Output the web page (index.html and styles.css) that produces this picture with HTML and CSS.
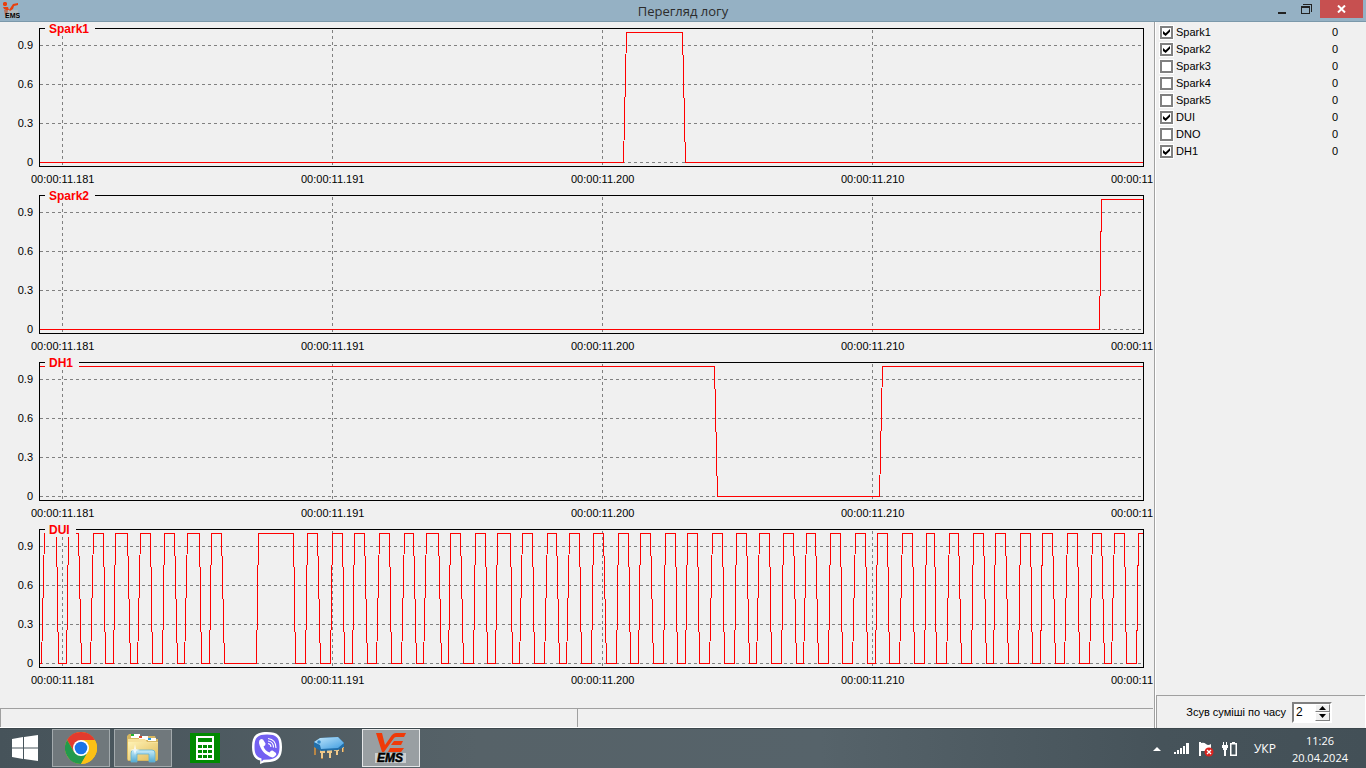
FILE: index.html
```html
<!DOCTYPE html>
<html lang="uk">
<head>
<meta charset="utf-8">
<title>Перегляд логу</title>
<link rel="stylesheet" href="styles.css">
</head>
<body>
<svg class="defs" aria-hidden="true">
  <defs>
    <g id="grid">
      <path class="grid-line" d="M0 17H1103M0 56H1103M0 95H1103M0 134H1103"/>
      <path class="grid-line" d="M23 1V136M293 1V136M563 1V136M833 1V136"/>
    </g>
    <rect id="frame" class="frame" x="0" y="0" width="1104" height="138"/>
  </defs>
</svg>

<header class="titlebar">
  <svg class="app-icon" width="18" height="17" viewBox="0 0 18 17" aria-hidden="true">
    <rect x="3" y="8" width="13" height="8" fill="#b9bcbc" opacity=".7"/>
    <path d="M2 0h2l1 1v2L4 4H2L1 3V1zM1 5h5l1 3H4L2 7zM7 8l4-6 5-1v2l-4 1-1 3-3 2z" fill="#e8400f"/>
    <path d="M2 8h4l-1 5H3z" fill="#b5715a"/>
    <text class="app-icon-text" x="3" y="16">EMS</text>
  </svg>
  <h1 class="title">Перегляд логу</h1>
  <div class="window-buttons">
    <button class="win-btn" aria-label="Згорнути"><svg width="10" height="12" viewBox="0 0 10 12"><path d="M1 9h8v2H1z" fill="#222"/></svg></button>
    <button class="win-btn" aria-label="Відновити"><svg width="11" height="11" viewBox="0 0 11 11" shape-rendering="crispEdges"><path d="M2 0h9v8h-1V1H2zM0 2h9v8H0zM1 4v5h7V4z" fill="#222" fill-rule="evenodd"/></svg></button>
    <button class="win-btn win-close" aria-label="Закрити"><svg width="9" height="8" viewBox="0 0 9 8"><path d="M1 .5l7 7M8 .5l-7 7" stroke="#fff" stroke-width="2"/></svg></button>
  </div>
</header>

<div class="workspace">
  <main class="viewer">
    <section class="charts">
      <article class="chart">
        <div class="y-axis"><span>0.9</span><span>0.6</span><span>0.3</span><span>0</span></div>
        <div class="plot">
          <h2 class="chart-name">Spark1</h2>
          <svg class="plot-svg" viewBox="0 0 1105 139" preserveAspectRatio="none" aria-hidden="true"><g transform="translate(.5 .5)">
            <use href="#grid"/>
            <path class="trace" d="M0 134H584L587 4H643L646 134H1103"/>
            <use href="#frame"/>
          </g></svg>
        </div>
        <div class="x-axis"><span>00:00:11.181</span><span>00:00:11.191</span><span>00:00:11.200</span><span>00:00:11.210</span><span>00:00:11</span></div>
      </article>
      <article class="chart">
        <div class="y-axis"><span>0.9</span><span>0.6</span><span>0.3</span><span>0</span></div>
        <div class="plot">
          <h2 class="chart-name">Spark2</h2>
          <svg class="plot-svg" viewBox="0 0 1105 139" preserveAspectRatio="none" aria-hidden="true"><g transform="translate(.5 .5)">
            <use href="#grid"/>
            <path class="trace" d="M0 134H1060L1062 4H1103"/>
            <use href="#frame"/>
          </g></svg>
        </div>
        <div class="x-axis"><span>00:00:11.181</span><span>00:00:11.191</span><span>00:00:11.200</span><span>00:00:11.210</span><span>00:00:11</span></div>
      </article>
      <article class="chart">
        <div class="y-axis"><span>0.9</span><span>0.6</span><span>0.3</span><span>0</span></div>
        <div class="plot">
          <h2 class="chart-name">DH1</h2>
          <svg class="plot-svg" viewBox="0 0 1105 139" preserveAspectRatio="none" aria-hidden="true"><g transform="translate(.5 .5)">
            <use href="#grid"/>
            <path class="trace" d="M0 4H675L678 134H840L843 4H1103"/>
            <use href="#frame"/>
          </g></svg>
        </div>
        <div class="x-axis"><span>00:00:11.181</span><span>00:00:11.191</span><span>00:00:11.200</span><span>00:00:11.210</span><span>00:00:11</span></div>
      </article>
      <article class="chart">
        <div class="y-axis"><span>0.9</span><span>0.6</span><span>0.3</span><span>0</span></div>
        <div class="plot">
          <h2 class="chart-name">DUI</h2>
          <svg class="plot-svg" viewBox="0 0 1105 139" preserveAspectRatio="none" aria-hidden="true"><g transform="translate(.5 .5)">
            <use href="#grid"/>
            <path class="trace" transform="translate(-39 0)" d="M39 134H41L44 4H56L58 134H66L68 4H78L81 134H90L93 4H103L105 134H113L115 4H127L130 134H137L140 4H150L152 134H162L164 4H174L177 134H184L187 4H199L201 134H209L211 4H221L224 134H256L258 4H293L295 134H305L307 4H317L320 134H330L332 4H342L344 134H352L354 4H364L367 134H376L379 4H389L391 134H401L404 4H413L416 134H423L426 4H438L441 134H448L450 4H460L463 134H473L475 4H485L487 134H495L497 4H510L512 134H519L522 4H532L534 134H544L547 4H556L559 134H566L569 4H579L581 134H591L593 4H603L606 134H616L618 4H628L630 134H638L640 4H650L653 134H663L665 4H675L677 134H685L687 4H697L699 134H709L712 4H722L724 134H734L736 4H746L749 134H756L759 4H769L771 134H781L783 4H793L796 134H803L806 4H815L818 134H828L830 4H840L842 134H852L855 4H865L867 134H875L877 4H887L889 134H899L902 4H912L914 134H924L926 4H934L936 134H946L949 4H958L961 134H971L973 4H983L986 134H993L995 4H1005L1008 134H1018L1020 4H1030L1032 134H1040L1042 4H1052L1055 134H1064L1067 4H1077L1079 134H1089L1092 4H1101L1104 134H1111L1114 4H1124L1126 134H1136L1138 4H1142"/>
            <use href="#frame"/>
          </g></svg>
        </div>
        <div class="x-axis"><span>00:00:11.181</span><span>00:00:11.191</span><span>00:00:11.200</span><span>00:00:11.210</span><span>00:00:11</span></div>
      </article>
    </section>
    <footer class="statusbar"><div class="status-cell"></div><div class="status-cell"></div></footer>
  </main>

  <aside class="sidebar">
    <ul class="channels">
      <li><label><input type="checkbox" checked>Spark1</label><output>0</output></li>
      <li><label><input type="checkbox" checked>Spark2</label><output>0</output></li>
      <li><label><input type="checkbox">Spark3</label><output>0</output></li>
      <li><label><input type="checkbox">Spark4</label><output>0</output></li>
      <li><label><input type="checkbox">Spark5</label><output>0</output></li>
      <li><label><input type="checkbox" checked>DUI</label><output>0</output></li>
      <li><label><input type="checkbox">DNO</label><output>0</output></li>
      <li><label><input type="checkbox" checked>DH1</label><output>0</output></li>
    </ul>
    <div class="shift-panel">
      <label for="shift">Зсув суміші по часу</label>
      <div class="spin">
        <input id="shift" type="text" inputmode="numeric" value="2">
        <div class="spin-buttons">
          <button aria-label="Більше"><svg width="7" height="4" viewBox="0 0 7 4"><path d="M0 4L3.500 0 7 4z"/></svg></button>
          <button aria-label="Менше"><svg width="7" height="4" viewBox="0 0 7 4"><path d="M0 0L3.500 4 7 0z"/></svg></button>
        </div>
      </div>
    </div>
  </aside>
</div>

<nav class="taskbar">
  <button class="start" aria-label="Пуск"><svg width="26" height="26" viewBox="0 0 26 26"><path d="M0 4l11-2v10.500H0zM12 2l14-2v12.500H12zM0 13.500h11V24L0 22zM12 13.500h14V26l-14-2z" fill="#fff"/></svg></button>
  <div class="apps">
    <button class="app is-open" aria-label="Chrome">
      <svg width="32" height="32" viewBox="0 0 32 32">
        <circle cx="16" cy="16" r="16" fill="#fbc116"/>
        <path d="M2.140 8A16 16 0 0 1 29.860 8H16l-6.900 12z" fill="#e33b2e"/>
        <path d="M2.140 8A16 16 0 0 0 16 32l6.930-12L16 24l-6.930-4z" fill="#229a4c"/>
        <path d="M16 8h13.860A16 16 0 0 1 16 32l6.930-12z" fill="#fbc116"/>
        <circle cx="16" cy="16" r="8" fill="#fff"/><circle cx="16" cy="16" r="6.300" fill="#1a73e8"/>
      </svg>
    </button>
    <button class="app is-open" aria-label="Провідник">
      <svg width="34" height="32" viewBox="0 0 34 32">
        <defs>
          <linearGradient id="folder" x1="0" y1="0" x2="1" y2="1"><stop offset="0" stop-color="#fff3b5"/><stop offset="1" stop-color="#dfb958"/></linearGradient>
          <linearGradient id="stand" x1="0" y1="0" x2="0" y2="1"><stop offset="0" stop-color="#c9edfa"/><stop offset="1" stop-color="#51a9d3"/></linearGradient>
        </defs>
        <path d="M1 4l2-2h10l1 2h15l1 3h2v20l-1 2H2l-1-2z" fill="#d6b660"/>
        <path d="M5 2h9v4H5z" fill="#fff"/><path d="M5 2h3v2H5z" fill="#22b42d"/>
        <path d="M13 4h9v4h-9z" fill="#fff"/><path d="M13 4h3v2h-3z" fill="#d7472a"/>
        <path d="M2 7h17l2 3h11v3H2z" fill="#f7e19a"/><path d="M22 6h8v3h-8z" fill="#fff"/><path d="M22 6h3v2h-3z" fill="#2699e0"/>
        <path d="M2 10h17l2 1h11v16l-1 1H2z" fill="url(#folder)"/>
        <path d="M5 21q0-3 3-3h18q3 0 3 3v9h-6v-8H11v8H5z" fill="url(#stand)" stroke="#62b1d2" stroke-width=".8"/>
        <path d="M9 12l1 5 4 1-4 1-1 4-1-4-4-1 4-1z" fill="#fff" opacity=".8"/>
      </svg>
    </button>
    <button class="app" aria-label="Калькулятор">
      <svg width="30" height="30" viewBox="0 0 30 30" shape-rendering="crispEdges"><path d="M0 0h30v30H0z" fill="#008a00"/><path d="M6 3h18v24H6z" fill="#fff"/><path d="M8 5h14v4H8zM8 12h4v3H8zM13 12h4v3h-4zM18 12h4v3h-4zM8 17h4v3H8zM13 17h4v3h-4zM18 17h4v3h-4zM8 22h4v3H8zM13 22h4v3h-4zM18 22h4v3h-4z" fill="#008a00"/></svg>
    </button>
    <button class="app" aria-label="Viber">
      <svg width="32" height="32" viewBox="0 0 32 32">
        <path d="M16 0c11 0 15 4 15 15 0 10-4 14-12 15l-6 .5-4 1.500.3-3.500C3 27 1 22 1 15 1 4 5 0 16 0z" fill="#fff"/>
        <path d="M16 2.500c9.500 0 12.500 3 12.500 12.500 0 8.500-3 11.500-10 12.500l-6 .2L10.500 29.500v-3C5 25 3.500 21 3.500 15 3.500 5.500 6.500 2.500 16 2.500z" fill="#7360f2"/>
        <path d="M10 7l2 .5 2.500 4-.3 1.700-1.700 1.300c1 3 3 5 6 6l1.500-1.700 1.500-.2 3.500 2.500.3 1.600-2.300 2.400-1.700.3C14 23 9.500 18 8 11l.3-2.500z" fill="#fff"/>
        <path d="M17 11.500q3 .5 3 3.500M17 9q5.500.7 5.500 6.500M17 6.500q8 1 8 9.500" fill="none" stroke="#fff" stroke-width="1.100"/>
      </svg>
    </button>
    <button class="app" aria-label="Програматор">
      <svg width="32" height="24" viewBox="0 0 32 24">
        <defs><linearGradient id="chip" x1="0" y1="0" x2="1" y2="1"><stop offset="0" stop-color="#c5e9fc"/><stop offset="1" stop-color="#3d9be0"/></linearGradient></defs>
        <path d="M2 10v9M9 14v9M17 14v8M24 12v7M30 9v7" stroke="#b98746" stroke-width="2"/>
        <path d="M7 13h5v4h-2v5H8v-5H7zM14 13h5v4h-1v5h-2v-5h-2zM21 12h5v3h-1v4h-2v-4h-2zM28 9h3v3h-1v4h-1v-4h-1z" fill="#f2c988"/>
        <path d="M1 6l6-4 18-1 6 6v4l-6 3-17 1-7-4z" fill="#216ea9"/>
        <path d="M1 6l6-4 18-1 6 6-6 5-17 1-1-4z" fill="url(#chip)"/><circle cx="6" cy="6" r="1.800" fill="#2f86c7"/>
      </svg>
    </button>
    <button class="app is-active" aria-label="VEMS">
      <svg width="32" height="32" viewBox="0 0 32 32">
        <path d="M0 21h31v10H0z" fill="#ccd0d1"/>
        <path d="M1 1h6l3 12 7-10q2-2 4-2h10l-2 4h-8q-1 0-2 1L9 20H7z" fill="#f03a08"/>
        <path d="M19 9h9l-2 4H16zM15 16h14l-3 4H13z" fill="#f03a08"/>
        <text class="vems-text" x="2" y="30">EMS</text>
      </svg>
    </button>
  </div>
  <div class="tray">
    <svg width="8" height="5" viewBox="0 0 8 5"><path d="M0 5l4-4 4 4z" fill="#fff"/></svg>
    <svg width="16" height="12" viewBox="0 0 16 12" shape-rendering="crispEdges"><path d="M0 9h2v2H0zM3 7h2v4H3zM6 5h2v6H6zM9 3h2v8H9zM12 0h3v11h-3z" fill="#fff"/></svg>
    <svg width="16" height="16" viewBox="0 0 16 16"><path d="M1 1h2v14H1zM3 2q3-1 5 1t5 0v7H3z" fill="#fff"/><circle cx="11" cy="11" r="4.500" fill="#d9231f"/><path d="M9 9l4 4M13 9l-4 4" stroke="#fff" stroke-width="1.300"/></svg>
    <svg width="16" height="16" viewBox="0 0 16 16"><path d="M1 1h1v3h2V1h1v3h1v3H5v2H4v6H2V9H1V7H0V4h1zM10 1h3v1h2v13H8V2h2zM9.500 3.500v10h4v-10z" fill="#fff" fill-rule="evenodd"/></svg>
    <span class="lang">УКР</span>
    <time class="clock"><span>11:26</span><span>20.04.2024</span></time>
  </div>
</nav>
</body>
</html>
```

FILE: styles.css
```css
* { box-sizing: border-box; }

body {
  margin: 0;
  height: 100vh;
  display: flex;
  flex-direction: column;
  overflow: hidden;
  background: #f0f0f0;
  color: #000;
  font-family: "Liberation Sans", Arial, sans-serif;
  font-size: 11px;
}

button {
  margin: 0;
  padding: 0;
  border: 0;
  background: none;
  font: inherit;
}

svg { display: block; flex: none; }
.defs { position: absolute; width: 0; height: 0; }

/* Title bar */
.titlebar {
  flex: none;
  display: grid;
  grid-template-columns: 1fr auto 1fr;
  align-items: center;
  height: 22px;
  background: #95b1c4;
  border-bottom: 1px solid #7b98aa;
}
.app-icon { margin-left: 2px; }
.app-icon-text { font: bold 7px "Liberation Sans", Arial, sans-serif; }
.title {
  margin: 0;
  font: 13px/20px "Open Sans", "Noto Sans", sans-serif;
  color: #2c2c2c;
}
.window-buttons { display: flex; justify-self: end; align-self: start; padding-right: 3px; }
.win-btn { display: flex; justify-content: center; align-items: center; width: 24px; height: 18px; }
.win-close { width: 43px; margin-left: 2px; background: #c75050; }

/* Workspace */
.workspace { flex: 1; display: flex; min-height: 0; }
.viewer { flex: 1; display: flex; flex-direction: column; min-width: 0; }
.charts { flex: 1; padding-top: 6px; }
.chart {
  display: grid;
  grid-template-columns: 39px 1fr;
  grid-template-rows: 139px 28px;
  padding-right: 10px;
}
.y-axis {
  display: flex;
  flex-direction: column;
  padding: 11px 6px 0 0;
  text-align: right;
  line-height: 13px;
  gap: 26px;
}
.plot { position: relative; min-width: 0; }
.plot-svg { width: 100%; height: 139px; shape-rendering: crispEdges; }
.chart-name {
  position: absolute;
  left: 6px;
  top: -6px;
  margin: 0;
  padding: 0 6px 0 4px;
  background: #f0f0f0;
  color: #f00;
  font-size: 12px;
  line-height: 14px;
}
.grid-line { fill: none; stroke: #808080; stroke-dasharray: 3 3; }
.trace { fill: none; stroke: #f00; }
.frame { fill: none; stroke: #000; }
.x-axis {
  grid-column: 1 / -1;
  display: grid;
  grid-template-columns: repeat(4, 270fr) 42fr;
  margin: 6px -9px 0 31px;
  line-height: 13px;
  white-space: nowrap;
}
.x-axis span { min-width: 0; overflow: hidden; }

.statusbar { flex: none; display: flex; height: 20px; border-bottom: 1px solid #fff; padding-right: 1px; }
.status-cell { flex: 1; border: 1px solid #a0a0a0; border-width: 1px 0 0 1px; }

/* Sidebar */
.sidebar {
  flex: none;
  display: flex;
  flex-direction: column;
  justify-content: space-between;
  width: 212px;
  border-left: 1px solid #a0a0a0;
  box-shadow: inset 1px 0 #fff;
}
.channels { list-style: none; margin: 0; padding: 2px 28px 0 5px; }
.channels li { display: flex; justify-content: space-between; line-height: 17px; }
.channels label { display: flex; align-items: center; gap: 3px; }
.channels input {
  appearance: none;
  display: flex;
  width: 13px;
  height: 13px;
  margin: 0;
  border: 2px solid #808080;
  background: #fff;
  box-shadow: 0 0 0 1px #fff;
}
.channels input:checked::before {
  content: "";
  width: 7px;
  height: 7px;
  margin: 1px;
  background: #000;
  clip-path: polygon(0 30%, 38% 60%, 100% 0, 100% 38%, 38% 100%, 0 70%);
}
.shift-panel {
  display: flex;
  align-items: center;
  justify-content: flex-end;
  gap: 6px;
  height: 33px;
  margin: 0 1px 0 1px;
  padding-right: 33px;
  border: 1px solid #a0a0a0;
  border-width: 1px 0 0 1px;
  box-shadow: 1px 0 #fff;
}
.spin {
  display: flex;
  width: 40px;
  height: 21px;
  border: 2px solid;
  border-color: #808080 #fff #fff #808080;
  background: #fff;
}
.spin input {
  flex: 1;
  min-width: 0;
  padding: 0 0 0 2px;
  border: 0;
  background: none;
  outline: 0;
  font: 12px/16px "Liberation Sans", Arial, sans-serif;
}
.spin-buttons { display: flex; flex-direction: column; width: 15px; }
.spin-buttons button {
  flex: 1;
  display: flex;
  justify-content: center;
  align-items: center;
  background: #f0f0f0;
  border: 1px solid;
  border-color: #fff #808080 #808080 #fff;
}

/* Taskbar */
.taskbar {
  flex: none;
  display: flex;
  height: 40px;
  background: linear-gradient(90deg, #46535a, #566268 35%, #56636a 60%, #46535a 85%, #435057);
  color: #fff;
  font-family: "Open Sans", "Noto Sans", sans-serif;
  border-top: 1px solid #3c474c;
}
.start { width: 52px; padding: 6px 0 0 12px; display: flex; }
.apps { display: flex; gap: 4px; }
.app { display: flex; align-items: center; justify-content: center; width: 58px; height: 38px; }
.is-open { background: #70787c; border: 1px solid #a3aaad; }
.is-active { background: #999fa2; border: 1px solid #e4e6e7; }
.vems-text { font: italic bold 12px "Liberation Sans", Arial, sans-serif; stroke: #000; stroke-width: .5px; }
.tray { display: flex; align-items: center; gap: 8px; margin-left: auto; padding-right: 18px; }
.tray > svg:first-child { margin-right: 5px; }
.lang { margin: 0 8px 0 8px; font-size: 12px; }
.clock { display: flex; flex-direction: column; align-items: center; font-size: 11px; line-height: 17px; }
```
